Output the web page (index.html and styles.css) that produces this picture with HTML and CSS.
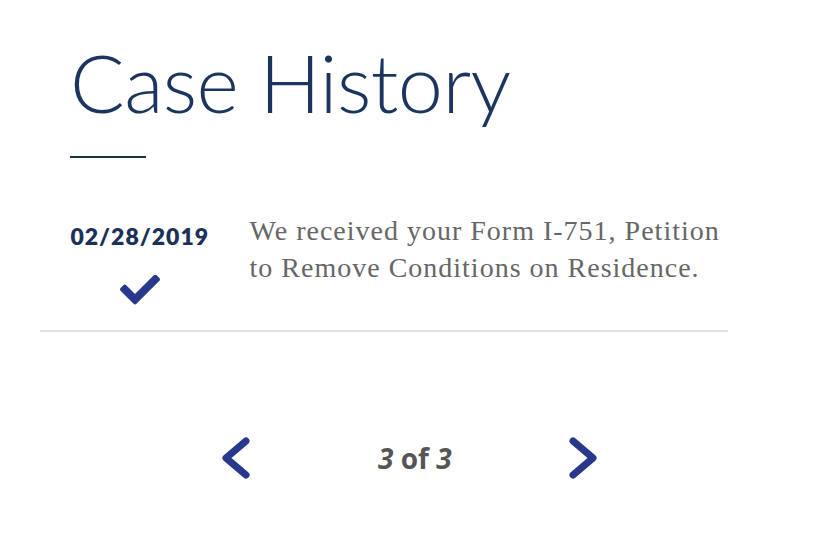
FILE: index.html
```html
<!DOCTYPE html>
<html lang="en">
<head>
  <meta charset="UTF-8">
  <title>Case History</title>
  <link rel="stylesheet" href="styles.css">
</head>
<body>

  <div class="history">
    <h1 class="title">Case History</h1>
    <div class="title-rule"></div>

    <div class="entry">
      <div class="entry-date">
        <div class="date">02/28/2019</div>
        <svg class="check" viewBox="0 0 512 380" width="40" height="30">
          <path d="M173.9 367.4l-166.4-166.4c-10-10-10-26.2 0-36.2l36.2-36.2c10-10 26.2-10 36.2 0L192 240.7 432.1 0.6c10-10 26.2-10 36.2 0l36.2 36.2c10 10 10 26.2 0 36.2l-294.4 294.4c-10 10-26.2 10-36.2 0z"/>
        </svg>
      </div>
      <p class="entry-text">We received your Form I-751, Petition to Remove Conditions on Residence.</p>
    </div>

    <div class="pager">
      <svg class="arrow" viewBox="0 0 30 42" width="30" height="42">
        <polyline points="25,4 5,21 25,38"/>
      </svg>
      <div class="count"><em>3</em> of <em>3</em></div>
      <svg class="arrow" viewBox="0 0 30 42" width="30" height="42">
        <polyline points="5,4 25,21 5,38"/>
      </svg>
    </div>
  </div>

</body>
</html>
```

FILE: styles.css
```css
body {
  margin: 0;
  background: #fff;
  font-family: Lato, "Open Sans", sans-serif;
}
.history {
  width: 688px;
  padding: 33px 0 0 40px;
}
.title {
  margin: 0 0 0 30px;
  font-family: Lato, sans-serif;
  font-weight: 300;
  font-size: 81px;
  letter-spacing: -0.6px;
  line-height: 1.2;
  color: #1b355f;
}
.title-rule {
  width: 76px;
  height: 2px;
  margin: 26px 0 0 30px;
  background: #1b3049;
}
.entry {
  display: flex;
  gap: 40px;
  padding: 64px 0 25px 30px;
  border-bottom: 2px solid #e2e2e2;
}
.entry-date {
  width: 140px;
  display: flex;
  flex-direction: column;
  align-items: center;
}
.date {
  font-family: Lato, sans-serif;
  font-weight: 800;
  font-size: 23px;
  letter-spacing: 1px;
  color: #1b3157;
}
.check {
  margin-top: 25px;
  fill: #28388c;
}
.entry-text {
  margin: -10px 0 0;
  font-family: "Liberation Serif", serif;
  font-size: 28px;
  letter-spacing: 1px;
  line-height: 37px;
  color: #666;
  width: 480px;
}
.pager {
  display: flex;
  align-items: center;
  margin: 105px 0 0 -40px;
  padding-left: 221px;
}
.arrow {
  fill: none;
  stroke: #28388c;
  stroke-width: 7;
  stroke-linecap: round;
  stroke-linejoin: round;
}
.count {
  margin: 0 116px 0 127px;
  font-family: "Open Sans", sans-serif;
  font-weight: 700;
  font-size: 28px;
  color: #555;
}
.count em {
  font-style: italic;
}
```
